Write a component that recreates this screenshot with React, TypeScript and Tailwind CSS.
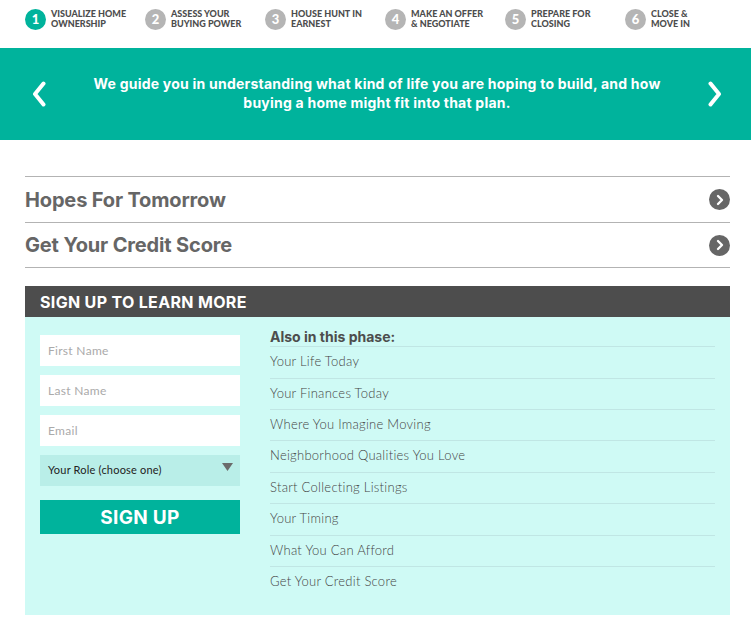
import { ChevronRight } from "lucide-react";

const steps = [
  ["Visualize Home", "Ownership"],
  ["Assess Your", "Buying Power"],
  ["House Hunt In", "Earnest"],
  ["Make An Offer", "& Negotiate"],
  ["Prepare For", "Closing"],
  ["Close &", "Move In"],
];

const phaseLinks = [
  "Your Life Today",
  "Your Finances Today",
  "Where You Imagine Moving",
  "Neighborhood Qualities You Love",
  "Start Collecting Listings",
  "Your Timing",
  "What You Can Afford",
  "Get Your Credit Score",
];

const fields = ["First Name", "Last Name", "Email"];

function BannerArrow({ flip }: { flip?: boolean }) {
  return (
    <svg width="14" height="26" viewBox="0 0 14 26" className={flip ? "rotate-180" : ""}>
      <path d="M11.500 2.500L3 13l8.500 10.500" fill="none" stroke="#fff" strokeWidth="4" strokeLinecap="round" strokeLinejoin="round" />
    </svg>
  );
}

export default function App() {
  return (
    <div className="w-[751px] h-[629px] bg-white overflow-hidden font-['Lato','Liberation_Sans',sans-serif]">
      <div className="h-12 pl-[25px] pt-[9px] flex">
        {steps.map((step, i) => (
          <div key={step[0]} className="w-[120px] flex items-start gap-[5px]">
            <div
              className={`w-[21px] h-[21px] rounded-full flex items-center justify-center text-white text-[13px] font-black ${
                i === 0 ? "bg-[#00b39c]" : "bg-[#b5b5b5]"
              }`}
            >
              {i + 1}
            </div>
            <div className="text-[9px] leading-[10px] font-black uppercase text-[#4d4d4d] whitespace-nowrap">
              <div>{step[0]}</div>
              <div>{step[1]}</div>
            </div>
          </div>
        ))}
      </div>

      <div className="h-[92px] bg-[#00b39c] flex items-center justify-between pl-[32px] pr-[29px]">
        <BannerArrow />
        <p className="w-[600px] -mt-[3px] text-center text-white text-[14px] leading-[19px] font-['Inter',sans-serif] font-bold tracking-[0.23px]">
          We guide you in understanding what kind of life you are hoping to build, and how
          <br />
          buying a home might fit into that plan.
        </p>
        <BannerArrow flip />
      </div>

      <div className="ml-[25px] mr-[21px] mt-9">
        {["Hopes For Tomorrow", "Get Your Credit Score"].map((title, i) => (
          <div
            key={title}
            className={`border-t border-[#b3b3b3] flex items-center justify-between ${i === 0 ? "h-[46px]" : "h-[45px]"}`}
          >
            <span className="text-[20px] font-['Inter',sans-serif] font-bold tracking-[-0.15px] text-[#666666]">{title}</span>
            <span className="w-[21px] h-[21px] rounded-full bg-[#666666] flex items-center justify-center">
              <ChevronRight className="w-[16px] h-[16px] text-white" strokeWidth={3.5} />
            </span>
          </div>
        ))}
        <div className="border-t border-[#b3b3b3]" />

        <div className="mt-[18px] h-[31px] bg-[#4d4d4d] pl-[15px] flex items-center text-white text-[16px] font-['Inter',sans-serif] font-bold uppercase tracking-[0.33px]">
          Sign Up To Learn More
        </div>

        <div className="h-[298px] bg-[#cffaf5] px-[15px] pt-[18px] flex gap-[30px]">
          <div className="w-[200px] shrink-0">
            {fields.map((f) => (
              <div key={f} className="h-[31px] mb-[9px] bg-white pl-2 flex items-center text-[12px] tracking-[0.3px] text-[#aaaaaa]">
                {f}
              </div>
            ))}
            <div className="h-[31px] bg-[#b9eee8] pl-2 pr-[7px] flex items-center justify-between text-[11px] tracking-[0.2px] text-[#222222]">
              <span>Your Role (choose one)</span>
              <svg width="11" height="8" viewBox="0 0 11 8" className="-mt-[7px]">
                <path d="M0 0h11L5.500 8z" fill="#6b6b6b" />
              </svg>
            </div>
            <div className="mt-[14px] h-[34px] pt-[2px] bg-[#00b39c] flex items-center justify-center text-white text-[19px] font-['Inter',sans-serif] font-bold tracking-[0.3px]">
              SIGN UP
            </div>
          </div>

          <div className="flex-1">
            <div className="h-[11px] -mt-[7px] mb-[1px] text-[14px] leading-[17px] font-['Inter',sans-serif] font-bold text-[#4d4d4d]">
              Also in this phase:
            </div>
            <div className="mt-[7.3px]">
              {phaseLinks.map((link) => (
                <div
                  key={link}
                  className="h-[31.4px] border-t border-[#c0e6e4] pt-[6px] text-[13px] leading-[16px] font-light tracking-[0.27px] text-[#454545]"
                >
                  {link}
                </div>
              ))}
            </div>
          </div>
        </div>
      </div>
    </div>
  );
}
